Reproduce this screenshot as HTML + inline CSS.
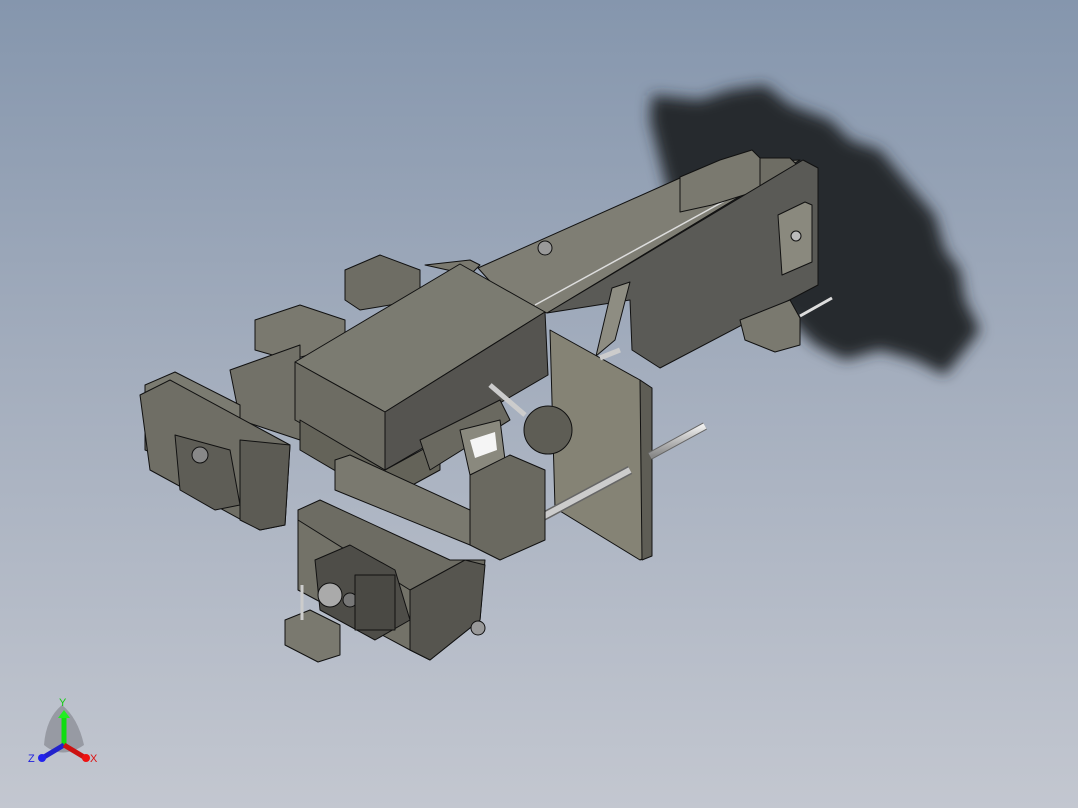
<!DOCTYPE html>
<html><head><meta charset="utf-8"><style>
html,body{margin:0;padding:0;width:1078px;height:808px;overflow:hidden}
body{background:linear-gradient(#8596ad 0%,#a3adbd 45%,#c3c7d0 100%)}
svg{position:absolute;left:0;top:0}
</style></head><body>
<svg width="1078" height="808" viewBox="0 0 1078 808" xmlns="http://www.w3.org/2000/svg">
<defs>
<filter id="bl" x="-20%" y="-20%" width="140%" height="140%"><feGaussianBlur stdDeviation="7"/></filter>
<linearGradient id="rod" x1="0" y1="0" x2="0" y2="1"><stop offset="0" stop-color="#eee"/><stop offset="1" stop-color="#888"/></linearGradient>
</defs>
<!-- shadow -->
<path d="M652,95 L700,100 L730,90 L765,85 L790,105 L830,120 L850,140 L880,150 L905,180 L935,215 L945,250 L960,270 L965,300 L980,330 L965,350 L945,375 L915,360 L880,350 L845,360 L815,345 L790,320 L760,300 L720,270 L690,240 L670,200 L660,160 L650,120 Z" fill="#25292e" filter="url(#bl)"/>
<g stroke="#111" stroke-width="1" stroke-linejoin="round">
<!-- beam top rail -->
<polygon points="478,268 680,178 700,186 755,162 800,160 547,313 505,298" fill="#7f7e74"/>
<line x1="535" y1="305" x2="790" y2="165" stroke="#ddd" stroke-width="1.5"/>
<!-- top blocks -->
<polygon points="680,177 720,160 752,150 760,158 760,190 712,205 680,212" fill="#7a796f"/>
<polygon points="760,158 790,158 800,168 760,190" fill="#6e6d64"/>
<!-- side plate -->
<polygon points="547,313 803,160 818,168 818,285 660,368 632,350 630,300" fill="#5a5a56"/>
<polygon points="778,215 805,202 812,205 812,262 782,275" fill="#8a897e"/>
<circle cx="796" cy="236" r="5" fill="#bbb"/>
<polygon points="740,320 790,300 800,318 800,345 775,352 745,340" fill="#7a796f"/>
<line x1="800" y1="316" x2="832" y2="298" stroke="#ddd" stroke-width="3"/>
<polygon points="612,288 630,282 615,340 596,356" fill="#8e8d82"/>
<circle cx="545" cy="248" r="7" fill="#999"/>
<!-- vertical plate -->
<polygon points="550,330 640,380 652,390 650,555 640,560 555,508" fill="#858375"/>
<polygon points="640,380 652,388 652,556 642,560" fill="#5e5d55"/>
<line x1="600" y1="358" x2="620" y2="350" stroke="#ccc" stroke-width="5"/>
<circle cx="548" cy="430" r="24" fill="#5e5d55"/>
<!-- rods -->
<line x1="650" y1="456" x2="705" y2="426" stroke="#666" stroke-width="8"/>
<line x1="650" y1="456" x2="705" y2="426" stroke="url(#rod)" stroke-width="6"/>
<line x1="490" y1="545" x2="630" y2="470" stroke="#666" stroke-width="9"/>
<line x1="490" y1="545" x2="630" y2="470" stroke="#ccc" stroke-width="6"/>
<!-- left carriage/back -->
<polygon points="345,270 380,255 420,270 420,300 360,310 345,300" fill="#6e6d64"/>
<polygon points="255,320 300,305 345,320 345,345 290,360 255,350" fill="#7a796f"/>
<polygon points="230,370 300,345 300,440 240,420" fill="#727168"/>
<polygon points="425,265 470,260 480,265 470,275" fill="#7a796f"/>
<!-- top box -->
<polygon points="295,362 460,264 545,312 385,412" fill="#7b7b71"/>
<polygon points="295,362 385,412 385,470 295,420" fill="#6d6c63"/>
<polygon points="385,412 545,312 548,375 385,470" fill="#555450"/>
<polygon points="300,420 385,470 440,440 440,470 385,500 300,450" fill="#646359"/>
<polygon points="420,440 500,400 510,420 430,470" fill="#6a6960"/>
<polygon points="460,430 500,420 505,460 470,475" fill="#8a897e"/>
<polygon points="470,440 495,432 497,450 475,458" fill="#f5f5f5" stroke="none"/>
<line x1="490" y1="385" x2="525" y2="415" stroke="#ccc" stroke-width="5"/>
<line x1="482" y1="480" x2="520" y2="505" stroke="#bbb" stroke-width="5"/>
<!-- middle block -->
<polygon points="470,475 510,455 545,470 545,540 500,560 470,545" fill="#6a6960"/>
<!-- left module -->
<polygon points="145,385 175,372 240,405 240,420 200,430 145,400" fill="#7b7b71"/>
<polygon points="145,400 200,430 200,470 145,450" fill="#6a6960"/>
<polygon points="140,395 170,380 290,445 285,525 260,530 150,470" fill="#6f6e65"/>
<polygon points="240,440 290,445 285,525 260,530 240,520" fill="#5c5b54"/>
<polygon points="175,435 230,450 240,505 215,510 180,490" fill="#5e5d56"/>
<circle cx="200" cy="455" r="8" fill="#888"/>
<!-- bottom module -->
<polygon points="335,460 350,455 470,510 470,545 335,490" fill="#7a796f"/>
<polygon points="298,510 320,500 450,560 485,560 480,620 430,660 410,650 298,580" fill="#6d6c63"/>
<polygon points="298,520 410,590 410,650 298,590" fill="#737268"/>
<polygon points="410,590 465,560 485,565 480,620 430,660 410,650" fill="#56554f"/>
<polygon points="315,560 350,545 395,570 410,620 375,640 320,610" fill="#4e4d48"/>
<circle cx="330" cy="595" r="12" fill="#aaa"/>
<circle cx="350" cy="600" r="7" fill="#777"/>
<rect x="355" y="575" width="40" height="55" fill="#4a4944"/>
<polygon points="285,620 310,610 340,625 340,655 318,662 285,645" fill="#7a796f"/>
<line x1="302" y1="585" x2="302" y2="620" stroke="#ccc" stroke-width="3"/>
<circle cx="478" cy="628" r="7" fill="#999"/>
</g>
<!-- triad -->
<g>
<path d="M44,745 Q46,718 62,705 Q78,718 84,745 Q62,760 44,745 Z" fill="#8d9098" opacity="0.8"/>
<line x1="64" y1="745" x2="64" y2="715" stroke="#1d1" stroke-width="5"/>
<polygon points="58,718 64,710 70,718" fill="#2e2"/>
<line x1="64" y1="745" x2="44" y2="757" stroke="#22c" stroke-width="5"/>
<circle cx="42" cy="758" r="4" fill="#22e"/>
<line x1="64" y1="745" x2="84" y2="757" stroke="#c11" stroke-width="5"/>
<circle cx="86" cy="758" r="4" fill="#e11"/>
<text x="59" y="706" font-family="Liberation Sans,sans-serif" font-size="11" fill="#1c1">Y</text>
<text x="28" y="762" font-family="Liberation Sans,sans-serif" font-size="11" fill="#22d">Z</text>
<text x="90" y="762" font-family="Liberation Sans,sans-serif" font-size="11" fill="#d11">X</text>
</g>
</svg>
</body></html>
